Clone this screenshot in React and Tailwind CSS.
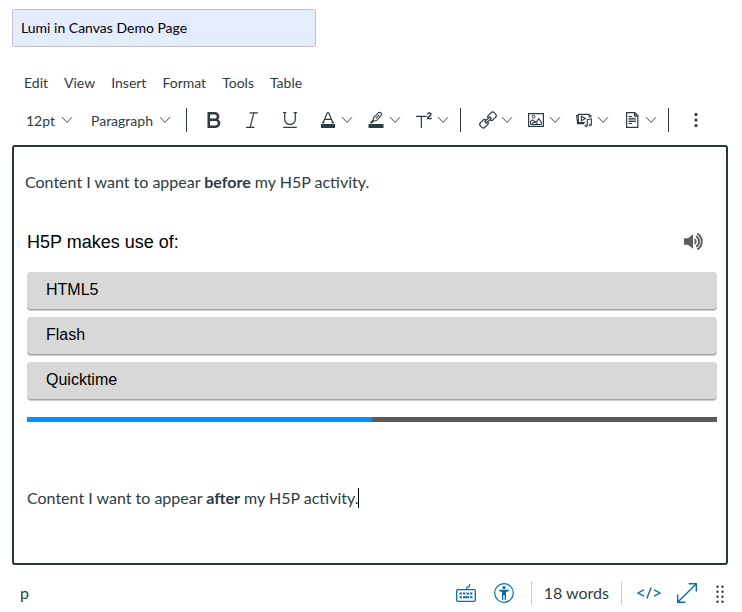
import React, { useState } from "react";

const MENUS = ["Edit", "View", "Insert", "Format", "Tools", "Table"];
const ANSWERS = ["HTML5", "Flash", "Quicktime"];

const Chevron = () => (
  <svg
    className="h-2 w-3 shrink-0 pointer-events-none"
    viewBox="0 0 12 8"
    fill="none"
    stroke="#3a4850"
    aria-hidden="true"
  >
    <path d="M1 1.2 6 6.3 11 1.2" />
  </svg>
);

const Icon = ({ children }) => (
  <svg
    className="h-4 w-4 shrink-0 overflow-visible"
    viewBox="0 0 16 16"
    fill="none"
    stroke="currentColor"
    aria-hidden="true"
  >
    {children}
  </svg>
);

const BoldIcon = () => (
  <Icon>
    <path
      strokeWidth="2.6"
      d="M2.8 1.3h6a3.1 3.1 0 0 1 0 6.5h-6M2.8 7.8h6.8a3.4 3.4 0 0 1 0 6.9H2.8zM2.8 0v16"
    />
  </Icon>
);

const ItalicIcon = () => (
  <Icon>
    <path strokeWidth="1.2" d="M5.5.8H14M2 15.3h8.5M9.8.8 6.2 15.3" />
  </Icon>
);

const UnderlineIcon = () => (
  <Icon>
    <path
      strokeWidth="1.2"
      d="M1 .6h3.4M11.6.6H15M2.7.6v6.9a5.3 4.9 0 0 0 10.6 0V.6M1.2 15.4h13.6"
    />
  </Icon>
);

const TextColorIcon = () => (
  <Icon>
    <path strokeWidth="1.2" d="M3.2 10.6 7.3.8h1.4l4.1 9.8M4.6 7.3h6.8M2 10.6h2.6M11.4 10.6H14" />
    <path fill="currentColor" stroke="none" d="M1 12h14v4H1z" />
  </Icon>
);

const HighlightIcon = () => (
  <Icon>
    <path
      strokeWidth="1.1"
      d="M5.6 5.6 10.4.8Q11.8-.2 13 .9T13.1 3.7L8.6 8.6 5 9.4zM5 9.4 3.9 10.6H2.6L5 8M7.8 6.4l3.4-3.6"
    />
    <path fill="currentColor" stroke="none" d="M.5 12h15v4H.5z" />
  </Icon>
);

const SuperscriptIcon = () => (
  <Icon>
    <path strokeWidth="1.2" d="M0 4.4h10.8M5.4 4.4V16" />
    <path strokeWidth="1.4" d="M11.5 2.3C11.7.5 15 .5 15 2.3c0 1.5-3.3 2.3-3.5 4.2h4.2" />
  </Icon>
);

const LinkIcon = () => (
  <Icon>
    <g strokeWidth="1.2" transform="rotate(-43 8 8)">
      <rect x="-1.6" y="4.8" width="8.2" height="6.4" rx="2.4" />
      <rect x="9.4" y="4.8" width="8.2" height="6.4" rx="2.4" />
      <path fill="#fff" d="M4.6 7h6.8v2H4.6z" />
    </g>
  </Icon>
);

const ImageIcon = () => (
  <Icon>
    <path strokeWidth="1.2" d="M.6 1.6h14.8v12.8H.6z" />
    <circle cx="5.6" cy="4.6" r="1.4" />
    <path
      strokeWidth="1.1"
      d="M2.5 12.5h11M2.6 12.3V9.4l2.2-1.5 2.2 2 2-.6 1.7-2.7 2.7 3.6v2M4 11.4l3-1.5 2.6 1.8"
    />
  </Icon>
);

const MediaIcon = () => (
  <Icon>
    <path strokeWidth="1.1" d="M9 10.5H2.4V2.4h10.8v3M2.4 3.6H.6l1 8h6.6M13.2 3.6h1.7l-.2 2" />
    <path strokeWidth="1.1" d="M5.4 4.2v4.6l4-2.3z" />
    <path strokeWidth="1.1" d="M11.2 13.4V7.6l4.2-.8v5.8" />
    <ellipse cx="10.1" cy="13.8" rx="1.2" ry="1" />
    <ellipse cx="14.3" cy="13" rx="1.2" ry="1" />
  </Icon>
);

const DocumentIcon = () => (
  <Icon>
    <path strokeWidth="1.2" d="M2.6.6h8.2l3 3v11.8H2.6z" />
    <path fill="currentColor" fillOpacity="0.4" d="M10.4.8v3.4h3.2z" />
    <path d="M4.5 4.5h3.6M4.5 6.3h7.3M4.5 7.9h7.3M4.5 9.5h7.3M4.5 11.5h3.4" />
  </Icon>
);

const Divider = ({ className = "" }) => (
  <span className={`h-6 w-px shrink-0 bg-[#2d3b45] ${className}`} />
);

const ToolButton = ({ label, children, menu }) => (
  <button
    type="button"
    aria-label={label}
    aria-haspopup={menu ? "menu" : undefined}
    className="flex items-center gap-[5px]"
  >
    {children}
    {menu && <Chevron />}
  </button>
);

const ToolSelect = ({ label, options, className }) => (
  <div className="flex items-center">
    <select
      aria-label={label}
      className={`appearance-none bg-transparent pt-0.5 text-sm outline-none ${className}`}
    >
      {options.map((option) => (
        <option key={option}>{option}</option>
      ))}
    </select>
    <Chevron />
  </div>
);

const Toolbar = () => (
  <div
    role="toolbar"
    aria-label="Formatting"
    className="flex items-center pl-[14px] pt-[15px] pb-[13px] text-[#2d3b45]"
  >
    <div className="flex items-center gap-[18px]">
      <ToolSelect label="Font size" options={["12pt", "14pt", "18pt"]} className="w-[35px]" />
      <ToolSelect
        label="Block format"
        options={["Paragraph", "Heading 2", "Heading 3"]}
        className="w-[68px]"
      />
    </div>
    <Divider className="ml-[15px] mr-[19px]" />
    <div className="flex items-center gap-[22px]">
      <ToolButton label="Bold"><BoldIcon /></ToolButton>
      <ToolButton label="Italic"><ItalicIcon /></ToolButton>
      <ToolButton label="Underline"><UnderlineIcon /></ToolButton>
      <div className="flex items-center gap-[15px]">
        <ToolButton label="Text color" menu><TextColorIcon /></ToolButton>
        <ToolButton label="Highlight color" menu><HighlightIcon /></ToolButton>
        <ToolButton label="Superscript" menu><SuperscriptIcon /></ToolButton>
      </div>
    </div>
    <Divider className="ml-[11px] mr-[19px]" />
    <div className="flex items-center gap-[15px]">
      <ToolButton label="Links" menu><LinkIcon /></ToolButton>
      <ToolButton label="Images" menu><ImageIcon /></ToolButton>
      <ToolButton label="Media" menu><MediaIcon /></ToolButton>
      <ToolButton label="Documents" menu><DocumentIcon /></ToolButton>
    </div>
    <Divider className="ml-[11px] mr-[19px]" />
    <ToolButton label="More">
      <Icon>
        <g fill="currentColor" stroke="none">
          <circle cx="8" cy="2.4" r="1.6" />
          <circle cx="8" cy="8" r="1.6" />
          <circle cx="8" cy="13.6" r="1.6" />
        </g>
      </Icon>
    </ToolButton>
  </div>
);

const Quiz = () => (
  <section className="pl-[13px] pr-[9px] font-['Liberation_Sans',Arial,sans-serif] text-black">
    <div className="flex h-6 items-center justify-between pr-[13px]">
      <h2 className="text-lg">H5P makes use of:</h2>
      <button type="button" aria-label="Mute sounds" className="text-[#5e5e5e]">
        <svg
          className="h-5 w-5"
          viewBox="0 0 20 20"
          fill="none"
          stroke="currentColor"
          strokeWidth="1.9"
          aria-hidden="true"
        >
          <path fill="currentColor" stroke="none" d="M0 6.2h4l5-4v14.6l-5-4H0z" />
          <path d="M10.6 7.2a2.9 2.9 0 0 1 0 4.6M12.1 4.2a6.2 6.2 0 0 1 0 10.6M13.3 1.6a9.2 9.2 0 0 1 0 15.8" />
        </svg>
      </button>
    </div>
    <div className="mt-[18px] flex flex-col gap-[7px]">
      {ANSWERS.map((answer) => (
        <button
          key={answer}
          type="button"
          className="h-[38px] rounded border-b border-[#a3a3a3] bg-[#d8d8d8] px-[19px] pb-px text-left text-base shadow-[0_1px_0_#cfcfcf]"
        >
          {answer}
        </button>
      ))}
    </div>
    <div
      role="progressbar"
      aria-label="Question progress"
      aria-valuenow={50}
      className="mt-[17px] h-[5px] bg-[#5a5a5a]"
    >
      <div className="h-full w-1/2 bg-[#0090ff]" />
    </div>
  </section>
);

const StatusBar = () => (
  <footer className="flex h-14 items-center pl-2 pr-[3px] text-base text-[#2d3b45]">
    <span>p</span>
    <div className="ml-auto flex items-center text-[#0770a3]">
      <button type="button" aria-label="Keyboard shortcuts" className="mr-[18px]">
        <svg className="h-5 w-5" viewBox="0 0 20 20" fill="none" stroke="currentColor" aria-hidden="true">
          <rect x=".7" y="6.7" width="18.6" height="11.6" rx="1" strokeWidth="1.3" />
          <path d="M10.5 6.5 11 4.2l2.2-.5.5-2.7" strokeWidth="1.2" />
          <path d="M3.5 10.6h13" strokeWidth="2" strokeDasharray="2.4 1.1" />
          <path d="M3.5 14.3h2.4M7 14.3h6M14.1 14.3h2.4" strokeWidth="2" />
        </svg>
      </button>
      <button type="button" aria-label="Accessibility checker" className="mr-[17px]">
        <svg className="h-5 w-5" viewBox="0 0 20 20" fill="currentColor" aria-hidden="true">
          <circle cx="10" cy="10" r="9.3" fill="none" stroke="currentColor" strokeWidth="1.2" />
          <circle cx="10" cy="4.7" r="1.6" />
          <path d="M5 6.8h10v1.3l-3 .8V17h-1.3v-4.4H9.3V17H8V8.9l-3-.8z" />
        </svg>
      </button>
      <span className="h-6 w-px bg-[#c7cdd1]" />
      <button type="button" className="mx-3 text-[#2d3b45]">18 words</button>
      <span className="h-6 w-px bg-[#c7cdd1]" />
      <button type="button" aria-label="Switch to the HTML editor" className="ml-[15px]">
        <svg className="h-5 w-6" viewBox="0 0 24 20" fill="none" stroke="currentColor" strokeWidth="1.4" aria-hidden="true">
          <path d="M7 6.8.9 10 7 13.2M17 6.8l6.1 3.2-6.1 3.2M14.2 4.5l-4.4 11" />
        </svg>
      </button>
      <button type="button" aria-label="Fullscreen" className="ml-4">
        <svg className="h-5 w-5" viewBox="0 0 20 20" fill="none" stroke="currentColor" strokeWidth="1.4" aria-hidden="true">
          <path d="M11.6.7h7.7v7.7M.7 11.6v7.7h7.7M19.3.7.7 19.3" />
        </svg>
      </button>
      <button type="button" aria-label="Resize editor" className="ml-[18px] text-[#2d3b45]">
        <svg className="h-5 w-2.5" viewBox="0 0 10 20" fill="currentColor" aria-hidden="true">
          {[4, 9, 14, 19].map((y) => (
            <React.Fragment key={y}>
              <circle cx="2.5" cy={y - 0.2} r="1.2" />
              <circle cx="7.5" cy={y - 0.2} r="1.2" />
            </React.Fragment>
          ))}
        </svg>
      </button>
    </div>
  </footer>
);

export default function App() {
  const [title, setTitle] = useState("Lumi in Canvas Demo Page");

  return (
    <main className="bg-white pl-3 pr-[14px] pt-[9px] font-[Lato,sans-serif] text-[#2d3b45]">
      <input
        type="text"
        aria-label="Page title"
        value={title}
        onChange={(e) => setTitle(e.target.value)}
        className="block h-[38px] w-full max-w-[304px] rounded-[3px] border border-[#c0c2c6] bg-[#e4edff] px-2 pb-0.5 text-sm text-black outline-none"
      />

      <nav className="mt-[26px] flex gap-4 pl-3 text-sm">
        {MENUS.map((menu) => (
          <button key={menu} type="button">
            {menu}
          </button>
        ))}
      </nav>

      <Toolbar />

      <div className="rounded-[3px] border-2 border-[#273540] pb-[53px] pt-[23px] text-base">
        <p className="mb-9 px-[11px]">
          Content I want to appear <strong>before</strong> my H5P activity.
        </p>
        <Quiz />
        <p className="mt-16 flex items-center px-[13px]">
          <span>
            Content I want to appear <strong>after</strong> my H5P activity.
          </span>
          <span className="-ml-px h-5 w-px bg-black" />
        </p>
      </div>

      <StatusBar />
    </main>
  );
}
